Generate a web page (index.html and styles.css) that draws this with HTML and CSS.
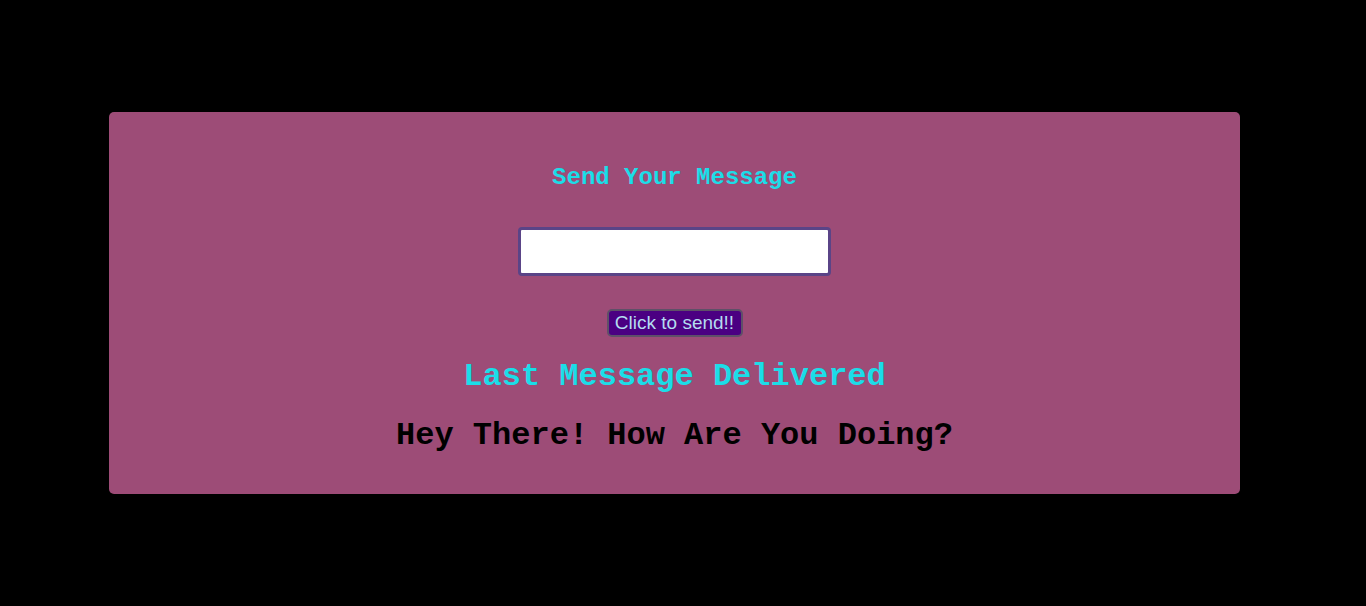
FILE: index.html
```html
<!DOCTYPE html>
<html>
<head>
<meta charset="utf-8">
<link rel="stylesheet" href="styles.css">
</head>
<body>
  <main class="card">
    <h2 class="title">Send Your Message</h2>
    <input class="msg-input" type="text">
    <button class="send-btn">Click to send!!</button>
    <h1 class="last">Last Message Delivered</h1>
    <h1 class="message">Hey There! How Are You Doing?</h1>
  </main>
</body>
</html>
```
FILE: styles.css
```css
html, body {
  margin: 0;
  padding: 0;
  background: #000;
}
body {
  padding-top: 112px;
  padding-left: 109px;
}
.card {
  width: 1131px;
  box-sizing: border-box;
  background: #9d4c77;
  border-radius: 5px;
  display: flex;
  flex-direction: column;
  align-items: center;
  padding: 52px 0 40px;
  font-family: "Courier New", "Liberation Mono", monospace;
}
.title {
  margin: 0;
  font-size: 24px;
  font-weight: bold;
  color: #1bdde8;
  line-height: 27px;
}
.msg-input {
  margin-top: 36px;
  width: 313px;
  height: 49px;
  box-sizing: border-box;
  border: 3px solid #5a4487;
  border-radius: 4px;
  background: #fff;
  outline: none;
}
.send-btn {
  margin-top: 33px;
  width: 136px;
  height: 28px;
  box-sizing: border-box;
  padding: 0;
  background: #4b0082;
  color: #b4dcf0;
  border: 2px solid #5e5068;
  border-radius: 5px;
  font-family: "Liberation Sans", Arial, sans-serif;
  font-size: 19px;
  line-height: 24px;
}
.last {
  margin: 22px 0 0;
  font-size: 32px;
  font-weight: bold;
  color: #1bdde8;
  line-height: 36px;
}
.message {
  margin: 23px 0 0;
  font-size: 32px;
  font-weight: bold;
  color: #000;
  line-height: 36px;
}
```
